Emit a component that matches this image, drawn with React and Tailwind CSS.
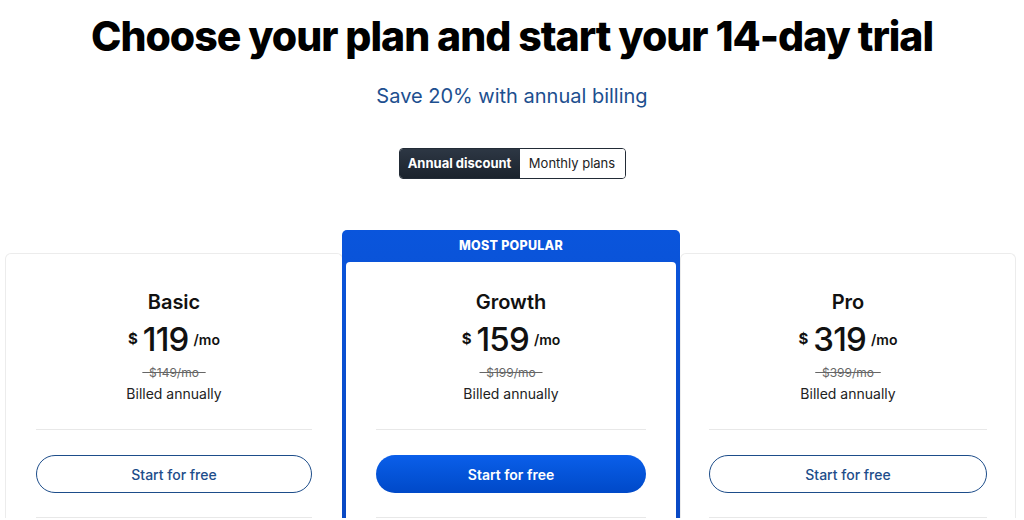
import React from 'react';

const plans = [
  { name: 'Basic', price: 119, was: 149 },
  { name: 'Growth', price: 159, was: 199, popular: true },
  { name: 'Pro', price: 319, was: 399 },
];

const PlanBody = ({ plan }) => (
  <>
    <div className="text-center">
      <h3 className="text-[20px] leading-7 font-semibold text-[#111]">{plan.name}</h3>
      <div className="mt-[3px] flex items-center justify-center gap-[5px] text-[#111]">
        <span className="text-[15px] font-bold">$</span>
        <span className="text-[33px] leading-[40px] font-medium tracking-tight">{plan.price}</span>
        <span className="text-[14px] font-semibold">/mo</span>
      </div>
      <div className="mt-[6px] text-[12px] leading-4 text-[#666] line-through">{'\u00a0\u00a0$' + plan.was + '/mo\u00a0\u00a0'}</div>
      <div className="mt-[3px] text-[14px] leading-5 text-[#222]">Billed annually</div>
    </div>
    <div className="mt-[25px] border-t border-[#e8e8e8]" />
    <button
      className={
        plan.popular
          ? 'mt-[25px] h-[38px] w-full rounded-full bg-gradient-to-b from-[#0b5fea] to-[#0049c8] text-[14px] font-semibold text-white'
          : 'mt-[25px] h-[38px] w-full rounded-full border border-[#1d4d8a] bg-white text-[14px] font-medium text-[#1d4d8a]'
      }
    >
      Start for free
    </button>
    <div className="mt-[24px] border-t border-[#e8e8e8]" />
  </>
);

export default function App() {
  return (
    <div className="h-[520px] w-[1024px] overflow-hidden bg-white font-['Inter',sans-serif]">
      <h1 className="pt-[12px] text-center text-[41px] leading-[48px] font-extrabold tracking-[-0.025em] text-black">
        Choose your plan and start your 14-day trial
      </h1>
      <p className="mt-[22px] text-center text-[20px] leading-7 text-[#1d4f8f]">Save 20% with annual billing</p>

      <div className="mt-[38px] flex justify-center">
        <div className="flex h-[31px] overflow-hidden rounded-[4px] border border-[#222b36]">
          <button className="w-[120px] bg-gradient-to-b from-[#2d3744] to-[#1b232d] text-[13px] font-bold text-white">
            Annual discount
          </button>
          <button className="w-[105px] bg-white text-[13px] text-[#222]">Monthly plans</button>
        </div>
      </div>

      <div className="mt-[51px] flex pl-[5px]">
        <div className="mt-[23px] w-[338px] rounded-t-[6px] border border-b-0 border-[#ececec] px-[30px] pt-[34px]">
          <PlanBody plan={plans[0]} />
        </div>
        <div className="-ml-px w-[338px] rounded-t-[5px] bg-gradient-to-b from-[#0a55dc] to-[#0949c4] px-1">
          <div className="flex h-[32px] items-center justify-center text-[12.5px] font-extrabold tracking-[0.02em] text-white">
            MOST POPULAR
          </div>
          <div className="rounded-t-[4px] bg-white px-[30px] pt-[26px]">
            <PlanBody plan={plans[1]} />
          </div>
        </div>
        <div className="mt-[23px] w-[336px] rounded-t-[6px] border border-b-0 border-[#ececec] px-[28px] pt-[34px]">
          <PlanBody plan={plans[2]} />
        </div>
      </div>
    </div>
  );
}
